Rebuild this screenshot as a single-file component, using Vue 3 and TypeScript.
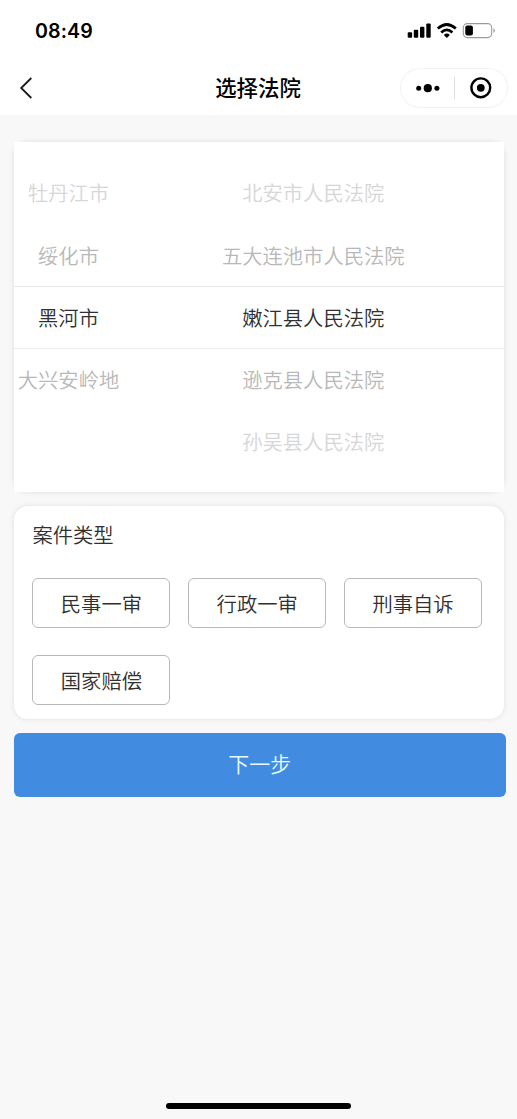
<script setup lang="ts">
interface PickerItem {
  label: string
  level: number
}

const cities: PickerItem[] = [
  { label: '牡丹江市', level: 2 },
  { label: '绥化市', level: 1 },
  { label: '黑河市', level: 0 },
  { label: '大兴安岭地', level: 1 },
]

const courts: PickerItem[] = [
  { label: '北安市人民法院', level: 2 },
  { label: '五大连池市人民法院', level: 1 },
  { label: '嫩江县人民法院', level: 0 },
  { label: '逊克县人民法院', level: 1 },
  { label: '孙吴县人民法院', level: 2 },
]

const caseTypes: string[] = ['民事一审', '行政一审', '刑事自诉', '国家赔偿']
</script>

<template>
  <div class="page">
    <header class="top">
      <div class="status">
        <span class="time">08:49</span>
        <svg class="signals" width="90" height="18" viewBox="0 0 90 18">
          <rect x="0.7" y="10.2" width="4.4" height="5.5" rx="1" />
          <rect x="6.8" y="7.8" width="4.4" height="7.9" rx="1" />
          <rect x="13" y="4.8" width="4.4" height="10.9" rx="1" />
          <rect x="19.3" y="1.5" width="4.4" height="14.2" rx="1" />
          <g fill="none" stroke="#000" stroke-width="2.7">
            <path d="M30.8 6.6 Q39.8 -1.6 48.8 6.6" />
            <path d="M34.2 10.4 Q39.8 5.2 45.4 10.4" />
          </g>
          <path d="M36.8 12.9 Q39.8 10.3 42.8 12.9 L39.8 15.9 Z" />
          <rect x="56.3" y="1.6" width="28.4" height="14" rx="4" fill="#fff" stroke="#9b9b9b" stroke-width="1.1" />
          <rect x="58.3" y="3.6" width="7.6" height="10" rx="2" />
          <path d="M86.5 6.3 Q89.2 8.6 86.5 10.9 Z" fill="#8e8e8e" />
        </svg>
      </div>
      <nav class="nav">
        <svg class="back" width="14" height="22" viewBox="0 0 14 22">
          <path d="M12.3 1 L2.2 11 L12.3 21" fill="none" stroke="#1a1a1a" stroke-width="1.8" />
        </svg>
        <h1 class="title">选择法院</h1>
        <div class="capsule">
          <svg width="108" height="40" viewBox="0 0 108 40">
            <circle cx="18.7" cy="20.2" r="2.5" />
            <circle cx="27.8" cy="20.2" r="4.1" />
            <circle cx="36.9" cy="20.2" r="2.5" />
            <path d="M54.5 8.5V31.5" stroke="#dedede" stroke-width="1" />
            <circle cx="80.8" cy="19.8" r="9.4" fill="none" stroke="#000" stroke-width="2.4" />
            <circle cx="80.8" cy="19.8" r="3.9" />
          </svg>
        </div>
      </nav>
    </header>

    <main class="content">
      <section class="picker-shell">
        <div class="picker">
          <ul class="column cities">
            <li v-for="item in cities" :key="item.label" :class="'level-' + item.level">{{ item.label }}</li>
          </ul>
          <ul class="column courts">
            <li v-for="item in courts" :key="item.label" :class="'level-' + item.level">{{ item.label }}</li>
          </ul>
          <div class="indicator"></div>
        </div>
      </section>

      <section class="card">
        <h2 class="card-title">案件类型</h2>
        <div class="types">
          <button v-for="name in caseTypes" :key="name" class="type" type="button">{{ name }}</button>
        </div>
      </section>

      <button class="next" type="button">下一步</button>
    </main>

    <div class="home-bar"></div>
  </div>
</template>

<style>
body {
  margin: 0;
  background: #f8f8f8;
}
</style>

<style scoped>
.page {
  display: flex;
  flex-direction: column;
  box-sizing: border-box;
  width: 517px;
  height: 1119px;
  overflow: hidden;
  background: #f8f8f8;
  color: #303030;
  font-family: "Noto Sans CJK SC", sans-serif;
  font-weight: 350;
}

.top {
  height: 115px;
  background: #fff;
}

.status {
  display: flex;
  align-items: center;
  justify-content: space-between;
  box-sizing: border-box;
  height: 60px;
  padding: 2px 20px 0 35px;
}

.time {
  color: #000;
  font: 600 19.6px/24px Inter, sans-serif;
  letter-spacing: 0.1px;
}

.signals {
  display: block;
}

.nav {
  display: grid;
  grid-template-columns: 1fr auto 1fr;
  align-items: center;
  height: 55px;
  padding: 0 9px 0 19px;
}

.back {
  display: block;
}

.title {
  margin: 0 11px 2px 0;
  color: #000;
  font-size: 21.4px;
  font-weight: 500;
  line-height: 30px;
}

.capsule {
  box-sizing: border-box;
  width: 108px;
  height: 40px;
  justify-self: end;
  border-radius: 20px;
  box-shadow: inset 0 0 0 1px #f3f3f3;
}

.capsule svg {
  display: block;
}

.content {
  flex: 1;
  padding: 27px 11.5px 0 14px;
}

.picker-shell {
  width: 489.5px;
  height: 350px;
  border-radius: 14px;
  box-shadow: 0 0 4px 1px #e4e4e4;
}

.picker {
  position: relative;
  display: flex;
  height: 100%;
  background: #fff;
}

.column {
  box-sizing: border-box;
  margin: 0;
  padding: 19.3px 0 0;
  list-style: none;
  text-align: center;
}

.cities {
  width: 109px;
}

.courts {
  flex: 1;
}

.column li {
  height: 62.3px;
  font-size: 20.3px;
  line-height: 62.3px;
  white-space: nowrap;
}

.level-0 {
  color: #303030;
}

.level-1 {
  color: #b8b8b8;
}

.level-2 {
  color: #d6d6d6;
}

.indicator {
  position: absolute;
  top: 144px;
  right: 0;
  left: 0;
  box-sizing: border-box;
  height: 63px;
  border-top: 1px solid #e7e7e7;
  border-bottom: 1px solid #ececec;
}

.card {
  box-sizing: border-box;
  width: 489.5px;
  height: 213px;
  margin-top: 14px;
  padding: 13px 19px 0 18.4px;
  border-radius: 14px;
  background: #fff;
  box-shadow: 0 0 4px 1px #e6e6e6;
}

.card-title {
  margin: 0 0 29px;
  font-size: 20.3px;
  font-weight: 350;
  line-height: 30px;
}

.types {
  display: grid;
  grid-template-columns: repeat(3, 138px);
  gap: 27.4px 17.8px;
}

.type {
  height: 50px;
  padding: 0;
  border: 1px solid #b8b8b8;
  border-radius: 6px;
  background: #fff;
  color: #303030;
  font: inherit;
  font-size: 20.3px;
}

.next {
  display: block;
  width: 100%;
  height: 64px;
  margin-top: 14px;
  padding: 0 0 4px;
  border: 0;
  border-radius: 6px;
  background: #418ce0;
  color: #e8fbff;
  font: inherit;
  font-size: 21px;
}

.home-bar {
  width: 185px;
  height: 6px;
  margin: 0 auto 10px;
  border-radius: 3px;
  background: #000;
}
</style>
